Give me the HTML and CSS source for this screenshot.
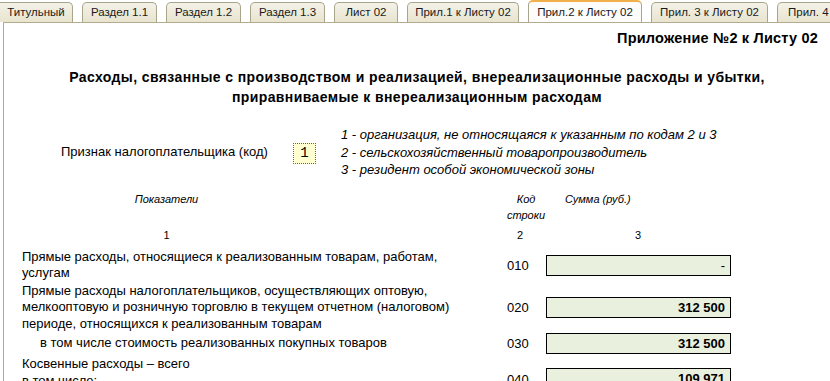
FILE: index.html
```html
<!DOCTYPE html>
<html lang="ru">
<head>
  <meta charset="UTF-8" />
  <title>Прил.2 к Листу 02</title>
  <link rel="stylesheet" href="styles.css">
</head>
<body>
  <div class="tabs">
    <div class="tab first">Титульный</div>
    <div class="tab">Раздел 1.1</div>
    <div class="tab">Раздел 1.2</div>
    <div class="tab">Раздел 1.3</div>
    <div class="tab">Лист 02</div>
    <div class="tab">Прил.1 к Листу 02</div>
    <div class="tab active">Прил.2 к Листу 02</div>
    <div class="tab">Прил. 3 к Листу 02</div>
    <div class="tab">Прил. 4 к Листу 02</div>
  </div>

  <div class="panel">
    <div class="appendix">Приложение №2 к Листу 02</div>
    <h1 class="title">Расходы, связанные с производством и реализацией, внереализационные расходы и убытки,<br>приравниваемые к внереализационным расходам</h1>

    <div class="sign">
      <div class="sign-label">Признак налогоплательщика (код)</div>
      <div class="sign-box">1</div>
      <div class="sign-notes">
        <div>1 - организация, не относящаяся к указанным по кодам 2 и 3</div>
        <div>2 - сельскохозяйственный товаропроизводитель</div>
        <div>3 - резидент особой экономической зоны</div>
      </div>
    </div>

    <div class="head">
      <div class="h-name">Показатели</div>
      <div class="h-code">Код<br>строки</div>
      <div class="h-sum">Сумма (руб.)</div>
    </div>
    <div class="nums">
      <div class="n-name">1</div>
      <div class="n-code">2</div>
      <div class="n-sum">3</div>
    </div>

    <div class="row r010">
      <div class="name">Прямые расходы, относящиеся к реализованным товарам, работам,<br>услугам</div>
      <div class="code">010</div>
      <div class="field dash">-</div>
    </div>
    <div class="row">
      <div class="name">Прямые расходы налогоплательщиков, осуществляющих оптовую,<br>мелкооптовую и розничную торговлю в текущем отчетном (налоговом)<br>периоде, относящихся к реализованным товарам</div>
      <div class="code">020</div>
      <div class="field">312 500</div>
    </div>
    <div class="row">
      <div class="name indent">в том числе стоимость реализованных покупных товаров</div>
      <div class="code">030</div>
      <div class="field">312 500</div>
    </div>
    <div class="row r040">
      <div class="name">Косвенные расходы – всего<br>в том числе:</div>
      <div class="code">040</div>
      <div class="field">109 971</div>
    </div>
  </div>
</body>
</html>
```

FILE: styles.css
```css
body {
  margin: 0;
  font-family: "Liberation Sans", Arial, sans-serif;
  font-size: 13px;
  color: #000;
  background: #fff;
  overflow: hidden;
  height: 381px;
}

.tabs {
  display: flex;
  gap: 9px;
  height: 22px;
  align-items: flex-end;
  background: #fff;
  white-space: nowrap;
  overflow: hidden;
}
.tab {
  flex: none;
  height: 20px;
  line-height: 19px;
  text-align: center;
  font-size: 11.5px;
  color: #1a1a1a;
  background: linear-gradient(#f4f2e8, #e8e4cf);
  border: 1px solid #a9a58c;
  border-bottom: none;
  border-radius: 5px 5px 0 0;
  box-sizing: border-box;
  overflow: hidden;
}
.tab:nth-child(1) { width: 73px; }
.tab:nth-child(2),
.tab:nth-child(3),
.tab:nth-child(4) { width: 75px; }
.tab:nth-child(5) { width: 64px; }
.tab:nth-child(6) { width: 112px; }
.tab:nth-child(7) { width: 114px; }
.tab:nth-child(8) { width: 117px; }
.tab:nth-child(9) { width: 120px; text-align: left; padding-left: 10px; }

.tab.first {
  border-left: none;
  border-radius: 0 5px 0 0;
}
.tab.active {
  height: 22px;
  line-height: 20px;
  background: #fcfcfa;
  border-top: 2px solid #f2b04a;
}

.panel {
  margin-left: 3px;
  border: 1px solid #b3ab8c;
  border-right: none;
  height: 400px;
  background: #fff;
}

.appendix {
  text-align: right;
  font-weight: bold;
  font-size: 14.5px;
  letter-spacing: 0.2px;
  line-height: 18px;
  padding: 6px 12px 0 0;
}

.title {
  margin: 20px 0 0;
  text-align: center;
  font-size: 14px;
  letter-spacing: 0.4px;
  line-height: 20px;
  font-weight: bold;
}

.sign {
  display: flex;
  margin-top: 19px;
}
.sign-label {
  margin: 18px 0 0 57px;
  width: 232px;
}
.sign-box {
  margin-top: 17px;
  width: 21px;
  height: 19px;
  background: #ffffd0;
  border: 1px dotted #6a6a40;
  text-align: center;
  line-height: 19px;
  font-family: "Liberation Mono", monospace;
  font-size: 14px;
}
.sign-notes {
  margin-left: 25px;
  font-style: italic;
  font-size: 13px;
  line-height: 17.5px;
}

.head {
  display: flex;
  margin-top: 12px;
  font-style: italic;
  font-size: 11px;
  line-height: 16px;
}
.h-name {
  width: 325px;
  text-align: center;
}
.h-code {
  margin-left: 177px;
  width: 40px;
  text-align: center;
}
.h-sum {
  margin-left: 19px;
}

.nums {
  display: flex;
  margin-top: 4px;
  font-size: 11px;
  line-height: 16px;
}
.n-name {
  width: 325px;
  text-align: center;
}
.n-code {
  margin-left: 188px;
  width: 10px;
}
.n-sum {
  margin-left: 108px;
}

.row {
  display: grid;
  grid-template-columns: 485px 39px 185px;
  align-items: center;
  margin-left: 18px;
  margin-top: 1px;
}
.row.r010 {
  margin-top: 6px;
}
.row.r040 {
  align-items: end;
  margin-top: 2px;
}
.name {
  line-height: 16.5px;
}
.name.indent {
  padding-left: 18px;
}
.field {
  height: 21px;
  line-height: 19px;
  border: 1px solid #000;
  box-sizing: border-box;
  background: #e9f0dd;
  text-align: right;
  padding-right: 5px;
  font-weight: bold;
  font-size: 13px;
}
.field.dash {
  font-weight: normal;
}
.r040 .code {
  line-height: 19px;
}
```
